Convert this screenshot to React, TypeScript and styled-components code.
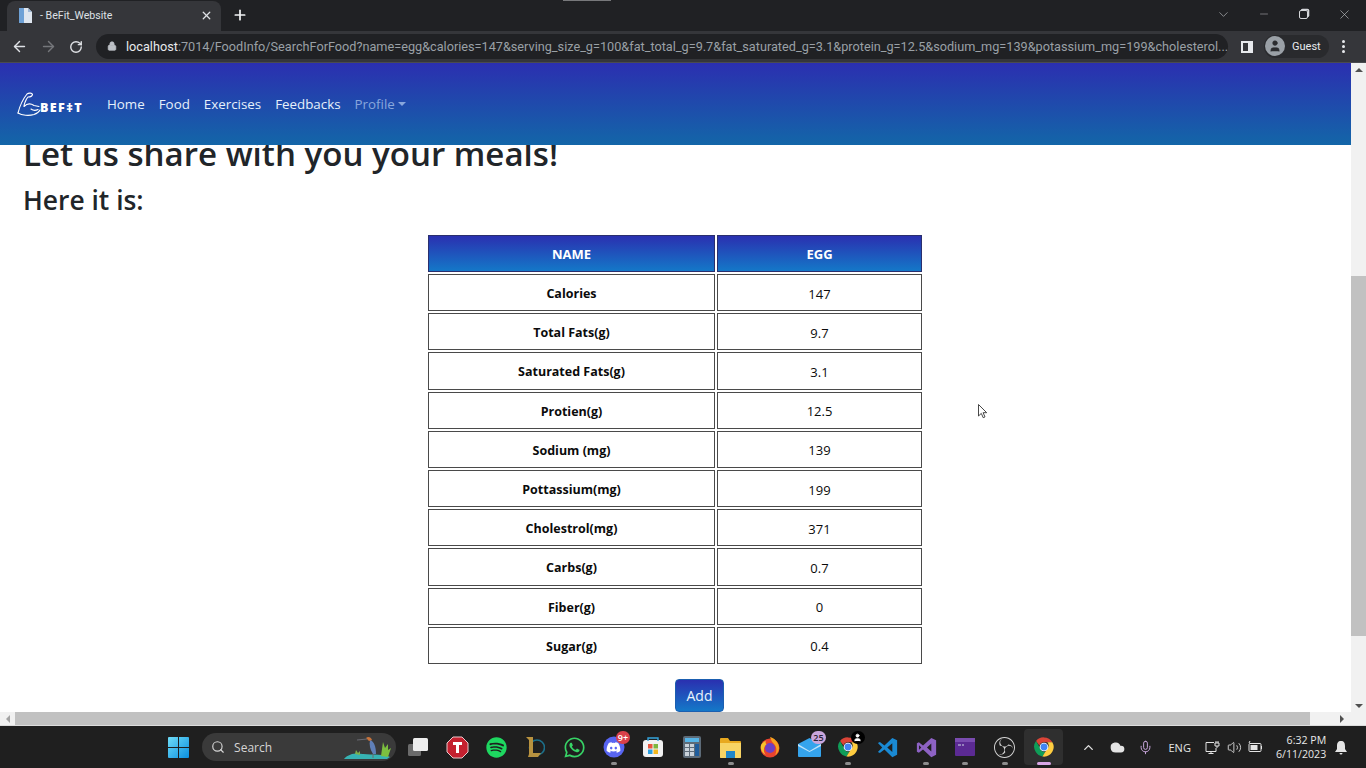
import styled, { createGlobalStyle } from "styled-components";
import { ArrowLeft, ArrowRight, RotateCw, Lock, X, Plus, ChevronDown, Minus, Search, ChevronUp, Mic, Volume2, Cloud, User } from "lucide-react";
import { FaSpotify, FaWhatsapp, FaDiscord } from "react-icons/fa";
import { SiObsstudio } from "react-icons/si";

const Global = createGlobalStyle`
  html, body { margin: 0; padding: 0; overflow: hidden; background: #fff; }
  * { box-sizing: border-box; }
  body { font-family: "Open Sans", "Noto Sans", sans-serif; }
`;

const Screen = styled.div`
  width: 1366px;
  height: 768px;
  display: flex;
  flex-direction: column;
  overflow: hidden;
  position: relative;
`;

/* ---- chrome ---- */
const TabStrip = styled.div`
  height: 31px;
  background: #202124;
  display: flex;
  align-items: flex-end;
  padding-left: 7px;
  color: #e8eaed;
  flex: none;
`;
const Tab = styled.div`
  width: 214px;
  height: 30px;
  background: #35363a;
  border-radius: 8px 8px 0 0;
  display: flex;
  align-items: center;
  padding: 0 8px 2px 11px;
  font-family: Roboto, sans-serif;
  font-size: 10.6px;
  gap: 7px;
`;
const TabTitle = styled.span`
  flex: 1;
  color: #dee1e6;
`;
const NewTab = styled.div`
  margin-left: 11px;
  height: 30px;
  padding-bottom: 2px;
  display: flex;
  align-items: center;
`;
const WindowButtons = styled.div`
  margin-left: auto;
  height: 31px;
  padding-bottom: 3px;
  display: flex;
  align-items: center;
  color: #c4c7ca;
`;
const WindowButton = styled.div<{ $w: number }>`
  width: ${(p) => p.$w}px;
  display: flex;
  justify-content: center;
`;
const Restore = styled.div`
  width: 9px;
  height: 9px;
  border: 1.2px solid #d5d7da;
  border-radius: 2px;
  box-shadow: 1.5px -1.5px 0 -0.2px #d5d7da;
`;
const Toolbar = styled.div`
  height: 32px;
  background: #35363a;
  border-bottom: 1px solid #4a4b4f;
  display: flex;
  align-items: center;
  padding-left: 11px;
  flex: none;
`;
const NavIcon = styled.div<{ $dim?: boolean }>`
  width: 29px;
  color: ${(p) => (p.$dim ? "#75777b" : "#dfe1e5")};
  display: flex;
`;
const Omnibox = styled.div`
  margin-left: -2px;
  width: 1132px;
  height: 25px;
  border-radius: 13px;
  background: #202124;
  display: flex;
  align-items: center;
  padding: 0 0 1px 11px;
  font-family: Roboto, sans-serif;
  font-size: 12.7px;
  color: #9aa0a6;
  white-space: nowrap;
  overflow: hidden;
`;
const Host = styled.span`
  color: #e8eaed;
`;
const LockWrap = styled.span`
  display: flex;
  margin-right: 9px;
  color: #bdc1c6;
`;
const SidePanel = styled.div`
  width: 12px;
  height: 12px;
  margin-left: 13px;
  border: 2px solid #e8eaed;
  border-right-width: 5px;
  flex: none;
`;
const GuestChip = styled.div`
  margin-left: 11px;
  width: 65px;
  height: 23px;
  border-radius: 12px;
  background: #292a2d;
  display: flex;
  align-items: center;
  gap: 7px;
  padding: 0 0 1px 1px;
  font-family: Roboto, sans-serif;
  font-size: 11px;
  color: #e8eaed;
`;
const Avatar = styled.div`
  width: 20px;
  height: 20px;
  border-radius: 50%;
  background: #9aa0a6;
  color: #2b2c2f;
  display: flex;
  align-items: center;
  justify-content: center;
`;
const Dots = styled.div`
  margin-left: 13px;
  display: flex;
  flex-direction: column;
  gap: 2px;
  span {
    width: 3px;
    height: 3px;
    border-radius: 50%;
    background: #e8eaed;
  }
`;

/* ---- page ---- */
const PageRow = styled.div`
  flex: 1;
  min-height: 0;
  display: flex;
`;
const Viewport = styled.div`
  flex: 1;
  overflow: hidden;
  background: #fff;
`;
const Navbar = styled.nav`
  height: 82px;
  background: linear-gradient(180deg, #2b2fb0 0%, #1366a8 100%);
  display: flex;
  align-items: center;
  padding: 0 0 0 17px;
  position: relative;
  z-index: 2;
`;
const Brand = styled.div`
  width: 83px;
  display: flex;
  align-items: center;
  color: #fff;
  font-weight: 800;
  font-size: 12.5px;
  letter-spacing: 1.4px;
`;
const BrandText = styled.span`
  margin: 6px 0 0 -2px;
`;
const NavLink = styled.a<{ $muted?: boolean }>`
  color: ${(p) => (p.$muted ? "#88a6dc" : "#e6f0fb")};
  font-size: 13.35px;
  margin: 0 7px;
  display: flex;
  align-items: center;
  gap: 3px;
`;
const Caret = styled.span`
  width: 0;
  height: 0;
  border-left: 4px solid transparent;
  border-right: 4px solid transparent;
  border-top: 4px solid #88a6dc;
`;
const Content = styled.main`
  padding: 0 0 0 23px;
  margin-top: -10px;
  color: #212529;
`;
const Heading = styled.h1`
  margin: 0;
  font-size: 33.1px;
  line-height: 38px;
  font-weight: 600;
`;
const SubHeading = styled.h2`
  margin: 10px 0 0;
  font-size: 26.4px;
  line-height: 34px;
  font-weight: 600;
`;
const FoodTable = styled.table`
  margin: 16px 0 0 403px;
  width: 498px;
  border-collapse: separate;
  border-spacing: 2px;
  table-layout: fixed;
  font-size: 12.5px;
  color: #0b0b0b;
`;
const HeadCell = styled.th<{ $w?: number }>`
  height: 37px;
  padding: 0;
  width: ${(p) => (p.$w ? `${p.$w}px` : "auto")};
  border: 1px solid #2a2f6e;
  background: linear-gradient(180deg, #2a30b0 0%, #1478c8 100%);
  color: #fff;
  font-weight: 700;
  font-size: 13px;
`;
const LabelCell = styled.td`
  height: 37.2px;
  padding: 2px 0 0;
  border: 1px solid #4a4a4a;
  text-align: center;
  font-weight: 700;
`;
const ValueCell = styled(LabelCell)`
  font-size: 13px;
  font-weight: 500;
`;
const AddButton = styled.button`
  display: block;
  margin: 13px 0 0 652px;
  width: 49px;
  height: 33px;
  border: 1px solid #1b5fb0;
  border-radius: 4px;
  background: linear-gradient(180deg, #2a30b0 0%, #1478c8 100%);
  color: #eaf3fc;
  font-family: inherit;
  font-size: 14px;
  padding: 0;
`;

/* ---- scrollbars ---- */
const VScroll = styled.div`
  width: 15px;
  background: #f1f1f1;
  display: flex;
  flex-direction: column;
  align-items: center;
  flex: none;
`;
const Arrow = styled.div<{ $dir: "up" | "down" | "left" | "right"; $color?: string }>`
  width: 0;
  height: 0;
  flex: none;
  border: 4px solid transparent;
  ${(p) => {
    const c = p.$color || "#505050";
    if (p.$dir === "up") return `border-bottom-color:${c}; border-top-width:0;`;
    if (p.$dir === "down") return `border-top-color:${c}; border-bottom-width:0;`;
    if (p.$dir === "left") return `border-right-color:${c}; border-left-width:0;`;
    return `border-left-color:${c}; border-right-width:0;`;
  }}
`;
const VThumb = styled.div`
  width: 100%;
  height: 360px;
  margin: 200px 0 0;
  background: #c1c1c1;
`;
const UpBox = styled.div`
  height: 13px;
  padding-top: 5px;
`;
const DownBox = styled.div`
  margin-top: auto;
  height: 13px;
  display: flex;
  align-items: center;
`;
const HScroll = styled.div`
  height: 14px;
  background: #f1f1f1;
  display: flex;
  align-items: center;
  flex: none;
  border-bottom: 1px solid #ddd;
`;
const HSide = styled.div<{ $w: number; $end?: boolean }>`
  width: ${(p) => p.$w}px;
  display: flex;
  justify-content: ${(p) => (p.$end ? "flex-end" : "center")};
  padding-right: ${(p) => (p.$end ? 7 : 0)}px;
  flex: none;
`;
const HThumb = styled.div`
  width: 1295px;
  height: 13px;
  background: #c1c1c1;
  flex: none;
`;

/* ---- taskbar ---- */
const Taskbar = styled.footer`
  height: 42px;
  flex: none;
  background: #1f1f1f;
  display: flex;
  align-items: center;
  padding-left: 159px;
  color: #eee;
`;
const Item = styled.div<{ $active?: boolean }>`
  width: 39.1px;
  height: 36px;
  flex: none;
  display: flex;
  align-items: center;
  justify-content: center;
  position: relative;
  border-radius: 4px;
  background: ${(p) => (p.$active ? "#2f2f2f" : "transparent")};
`;
const Dash = styled.span<{ $active?: boolean }>`
  position: absolute;
  bottom: 0;
  left: 50%;
  transform: translateX(-50%);
  width: ${(p) => (p.$active ? 14 : 6)}px;
  height: 3px;
  border-radius: 2px;
  background: ${(p) => (p.$active ? "#d9a6e6" : "#8d8d8d")};
`;
const Badge = styled.span<{ $bg: string; $fg: string }>`
  position: absolute;
  top: 2px;
  right: 3px;
  min-width: 14px;
  height: 13px;
  padding: 0 2px;
  border-radius: 7px;
  background: ${(p) => p.$bg};
  color: ${(p) => p.$fg};
  font-size: 9px;
  line-height: 13px;
  text-align: center;
  font-weight: 600;
  display: flex;
  align-items: center;
  justify-content: center;
`;
const SearchPill = styled.div`
  width: 194px;
  height: 28px;
  margin: 0 2.5px 0 4px;
  border-radius: 14px;
  background: #3a3a3a;
  display: flex;
  align-items: center;
  padding-left: 9px;
  gap: 9px;
  font-size: 12px;
  color: #d5d5d5;
  flex: none;
`;
const HeronBox = styled.div`
  margin-left: auto;
  margin-right: 3px;
  display: flex;
`;
const Tray = styled.div`
  margin-left: 15px;
  display: flex;
  align-items: center;
  color: #e4e4e4;
`;
const TraySlot = styled.div<{ $w: number }>`
  width: ${(p) => p.$w}px;
  display: flex;
  justify-content: center;
  font-size: 11px;
  flex: none;
`;
const Clock = styled.div`
  width: 62px;
  margin-left: 1px;
  margin-top: -1px;
  text-align: right;
  font-size: 10.6px;
  line-height: 14px;
  color: #e8e8e8;
`;
const Cursor = styled.svg`
  position: absolute;
  left: 978px;
  top: 404px;
`;
const RecorderNotch = styled.div`
  position: absolute;
  left: 563px;
  top: 0;
  width: 48px;
  height: 1px;
  background: #77787b;
`;

const Rows: [string, string][] = [
  ["Calories", "147"],
  ["Total Fats(g)", "9.7"],
  ["Saturated Fats(g)", "3.1"],
  ["Protien(g)", "12.5"],
  ["Sodium (mg)", "139"],
  ["Pottassium(mg)", "199"],
  ["Cholestrol(mg)", "371"],
  ["Carbs(g)", "0.7"],
  ["Fiber(g)", "0"],
  ["Sugar(g)", "0.4"],
];

function ArmLogo() {
  return (
    <svg width="25" height="25" viewBox="0 0 25 25" fill="none" stroke="#fff" strokeWidth="1.1" strokeLinecap="round" strokeLinejoin="round" style={{ flex: "none" }}>
      <path d="M1 21 C3 13 6 7 10 2 C12 0.5 15 1 15.5 2.5 C15 4.5 13 5 11 5 L9.5 7 C8 10 7 12 7 14.5 C10 11.5 14 11.5 17 13.5 L22 14.5" />
      <path d="M1 21 C5 23.5 12 24 17 22.5 C20 21.5 22 20 23 18" />
      <path d="M14 17 C16 18.5 19 18.5 21 17.5" />
    </svg>
  );
}

function ChromeIcon() {
  return (
    <svg width="22" height="22" viewBox="0 0 48 48">
      <path fill="#db4437" d="M24 3a21 21 0 0 1 18.2 10.5H24a10.5 10.5 0 0 0-10 7.2L6.6 10.9A21 21 0 0 1 24 3z" />
      <path fill="#0f9d58" d="M5.8 34.5A21 21 0 0 1 6.6 10.9l9.3 16.2a10.5 10.5 0 0 0 11.3 7.4L20.6 44.7A21 21 0 0 1 5.8 34.5z" />
      <path fill="#ffcd40" d="M42.2 13.5A21 21 0 0 1 24 45c-1.2 0-2.3-.1-3.4-.3L30 29.3a10.5 10.5 0 0 0 1.2-15.8z" />
      <circle cx="24" cy="24" r="9.5" fill="#fff" />
      <circle cx="24" cy="24" r="7.5" fill="#4285f4" />
    </svg>
  );
}

function WindowsLogo() {
  return (
    <svg width="21" height="21" viewBox="0 0 21 21">
      <defs>
        <linearGradient id="win" x1="0" y1="0" x2="1" y2="1">
          <stop offset="0" stopColor="#6fdcf7" />
          <stop offset="1" stopColor="#0a8fe0" />
        </linearGradient>
      </defs>
      <path fill="url(#win)" d="M0 1a1 1 0 0 1 1-1h9v10H0zM11 0h9a1 1 0 0 1 1 1v9H11zM0 11h10v10H1a1 1 0 0 1-1-1zM11 11h10v9a1 1 0 0 1-1 1h-9z" />
    </svg>
  );
}

function Heron() {
  return (
    <svg width="50" height="26" viewBox="0 0 50 26">
      <path fill="#37b3b3" d="M1 25 C6 19 14 19 20 20 C30 21 42 20 47 23 L44 25z" />
      <path fill="#7fb04a" d="M12 20 l1-4 2 3 2-2 0 4z" />
      <path fill="#5f7fb8" d="M27 6 C31 7 33 13 33 20 L30 20 C27 15 26 11 27 6z" />
      <path fill="#c9743c" d="M23 4 C25 2 28 3 29 6 L26 7z" />
      <path stroke="#6a6a72" strokeWidth="1" d="M14 6 L24 5 M30 20 L30 24" />
      <path fill="#7cbf3f" d="M38 22 L40 8 L42 14 L45 10 L45 16 L48 14 L45 23z" />
    </svg>
  );
}

function App() {
  return (
    <Screen>
      <Global />
      <RecorderNotch />
      <TabStrip>
        <Tab>
          <svg width="15" height="15" viewBox="0 0 15 15">
            <path fill="#dfe6ef" d="M1 0h9l4 4v11H1z" />
            <path fill="#6ea1d6" d="M1 0h5v15H1z" />
            <path fill="#9fb9d6" d="M10 0l4 4h-4z" />
          </svg>
          <TabTitle>- BeFit_Website</TabTitle>
          <X size={13} color="#dfe1e5" strokeWidth={2.4} />
        </Tab>
        <NewTab>
          <Plus size={16} strokeWidth={2.6} color="#f1f3f4" />
        </NewTab>
        <WindowButtons>
          <WindowButton $w={40}><ChevronDown size={15} strokeWidth={1} /></WindowButton>
          <WindowButton $w={41}><Minus size={12} strokeWidth={1} /></WindowButton>
          <WindowButton $w={38}><Restore /></WindowButton>
          <WindowButton $w={44}><X size={15} strokeWidth={1} /></WindowButton>
        </WindowButtons>
      </TabStrip>
      <Toolbar>
        <NavIcon><ArrowLeft size={17} /></NavIcon>
        <NavIcon $dim><ArrowRight size={17} /></NavIcon>
        <NavIcon><RotateCw size={14} strokeWidth={2.4} /></NavIcon>
        <Omnibox>
          <LockWrap><Lock size={10} fill="#bdc1c6" /></LockWrap>
          <Host>localhost</Host>
          :7014/FoodInfo/SearchForFood?name=egg&amp;calories=147&amp;serving_size_g=100&amp;fat_total_g=9.7&amp;fat_saturated_g=3.1&amp;protein_g=12.5&amp;sodium_mg=139&amp;potassium_mg=199&amp;cholesterol...
        </Omnibox>
        <SidePanel />
        <GuestChip>
          <Avatar><User size={14} fill="#2b2c2f" strokeWidth={1} /></Avatar>
          Guest
        </GuestChip>
        <Dots><span /><span /><span /></Dots>
      </Toolbar>

      <PageRow>
        <Viewport>
          <Navbar>
            <Brand>
              <ArmLogo />
              <BrandText>BEF‡T</BrandText>
            </Brand>
            <NavLink>Home</NavLink>
            <NavLink>Food</NavLink>
            <NavLink>Exercises</NavLink>
            <NavLink>Feedbacks</NavLink>
            <NavLink $muted>Profile<Caret /></NavLink>
          </Navbar>
          <Content>
            <Heading>Let us share with you your meals!</Heading>
            <SubHeading>Here it is:</SubHeading>
            <FoodTable>
              <thead>
                <tr>
                  <HeadCell $w={287}>NAME</HeadCell>
                  <HeadCell>EGG</HeadCell>
                </tr>
              </thead>
              <tbody>
                {Rows.map(([label, value]) => (
                  <tr key={label}>
                    <LabelCell>{label}</LabelCell>
                    <ValueCell>{value}</ValueCell>
                  </tr>
                ))}
              </tbody>
            </FoodTable>
            <AddButton>Add</AddButton>
          </Content>
        </Viewport>
        <VScroll>
          <UpBox><Arrow $dir="up" /></UpBox>
          <VThumb />
          <DownBox><Arrow $dir="down" /></DownBox>
        </VScroll>
      </PageRow>
      <HScroll>
        <HSide $w={15}><Arrow $dir="left" $color="#a3a3a3" /></HSide>
        <HThumb />
        <HSide $w={41} $end><Arrow $dir="right" /></HSide>
      </HScroll>

      <Taskbar>
        <Item><WindowsLogo /></Item>
        <SearchPill>
          <Search size={14} strokeWidth={2} />
          Search
          <HeronBox><Heron /></HeronBox>
        </SearchPill>
        <Item>
          <svg width="22" height="20" viewBox="0 0 22 20">
            <rect x="1" y="7" width="13" height="12" rx="1.5" fill="#6b6b6b" />
            <rect x="6" y="1" width="15" height="13" rx="1.5" fill="#eeeeee" />
          </svg>
        </Item>
        <Item>
          <svg width="23" height="23" viewBox="0 0 23 23">
            <path fill="#c4202f" stroke="#e9c9cc" strokeWidth="1" d="M7 1h9l6 6v9l-6 6H7l-6-6V7z" />
            <path fill="#fff" d="M7 6h9v3h-3v8h-3V9H7z" />
          </svg>
        </Item>
        <Item><FaSpotify size={21} color="#1ed760" /></Item>
        <Item>
          <svg width="20" height="23" viewBox="0 0 20 23" fill="none">
            <circle cx="12" cy="11.5" r="7.5" stroke="#1c6f8a" strokeWidth="1.6" />
            <path fill="#b8923f" d="M1 1h7v16h8l-3 4H3l1-3V4z" />
          </svg>
        </Item>
        <Item><FaWhatsapp size={23} color="#37d366" /></Item>
        <Item>
          <svg width="22" height="22" viewBox="0 0 22 22" style={{ position: "absolute" }}>
            <circle cx="11" cy="11" r="10.5" fill="#5865f2" />
          </svg>
          <FaDiscord size={15} color="#fff" style={{ position: "relative" }} />
          <Badge $bg="#d9404a" $fg="#fff">9+</Badge>
          <Dash />
        </Item>
        <Item>
          <svg width="22" height="22" viewBox="0 0 22 22">
            <rect x="1" y="4" width="20" height="17" rx="3" fill="#f2f2f2" />
            <path d="M6 5V2h10v3" fill="none" stroke="#35a4dc" strokeWidth="1.4" />
            <rect x="6" y="8" width="4.5" height="4.5" fill="#e8553e" />
            <rect x="11.5" y="8" width="4.5" height="4.5" fill="#7db73f" />
            <rect x="6" y="13.5" width="4.5" height="4.5" fill="#2a9fe0" />
            <rect x="11.5" y="13.5" width="4.5" height="4.5" fill="#f4b81f" />
          </svg>
        </Item>
        <Item>
          <svg width="18" height="22" viewBox="0 0 18 22">
            <rect width="18" height="22" rx="2" fill="#5d6b78" />
            <rect x="2" y="2" width="14" height="4" fill="#57b4e6" />
            <path fill="#c9d2da" d="M2 8h4v3H2zM7 8h4v3H7zM2 12h4v3H2zM7 12h4v3H7zM2 16h4v4H2zM7 16h4v4H7z" />
            <path fill="#1f5d9c" d="M12 8h4v12h-4z" />
          </svg>
        </Item>
        <Item>
          <svg width="23" height="21" viewBox="0 0 23 21">
            <path fill="#e8a91f" d="M1 2a1 1 0 0 1 1-1h7l2 3h10a1 1 0 0 1 1 1v15a1 1 0 0 1-1 1H2a1 1 0 0 1-1-1z" />
            <path fill="#f7d465" d="M1 6h21v14a1 1 0 0 1-1 1H2a1 1 0 0 1-1-1z" />
            <rect x="7" y="14" width="9" height="7" fill="#1f86c9" />
          </svg>
          <Dash />
        </Item>
        <Item>
          <svg width="22" height="22" viewBox="0 0 22 22">
            <circle cx="11" cy="12" r="9.5" fill="#e8432f" />
            <path fill="#f7a11e" d="M11 1c4 1 9 5 9 11 0 3-2 6-4 7 2-3 2-8-1-11C13 6 12 4 11 1z" />
            <path fill="#f6c22c" d="M2 9c2-3 4-4 5-4-1 2 0 3 1 3-4 3-4 8-1 11-4-2-6-6-5-10z" />
            <circle cx="11" cy="12" r="5" fill="#6e3fc4" />
          </svg>
        </Item>
        <Item>
          <svg width="23" height="20" viewBox="0 0 23 20">
            <path fill="#35a4ec" d="M0 7L11.5 1 23 7v12a1 1 0 0 1-1 1H1a1 1 0 0 1-1-1z" />
            <path fill="#bfe3f9" d="M0 7l11.5 7L23 7v2l-11.5 6L0 9z" />
          </svg>
          <Badge $bg="#c9a6dc" $fg="#2b2233">25</Badge>
        </Item>
        <Item>
          <ChromeIcon />
          <Badge $bg="#000" $fg="#fff"><User size={9} fill="#fff" /></Badge>
          <Dash />
        </Item>
        <Item>
          <svg width="21" height="21" viewBox="0 0 24 24">
            <path fill="#1a8ad4" d="M17.5 1L23 3.6v16.8L17.5 23l-9-8.6-5.2 4L1 17.2 6 12 1 6.8l2.3-1.2 5.2 4zM17.5 7l-5.8 5 5.8 5z" />
          </svg>
        </Item>
        <Item>
          <svg width="21" height="21" viewBox="0 0 24 24">
            <path fill="#8d62c4" d="M17.5 1L23 3.6v16.8L17.5 23 8 14.2 3.3 18 1 16.8V7.2L3.3 6 8 9.8zM3.5 9.5v5L6 12zM17.5 7.5L12.5 12l5 4.5z" />
          </svg>
          <Dash />
        </Item>
        <Item>
          <svg width="20" height="18" viewBox="0 0 20 18">
            <rect width="20" height="18" rx="1" fill="#5b2a93" />
            <rect width="20" height="4" fill="#7a4cb0" />
            <path d="M3 7h3M7 7h2" stroke="#cfd8e6" strokeWidth="1" />
          </svg>
          <Dash />
        </Item>
        <Item>
          <SiObsstudio size={21} color="#d5d5d5" />
          <Dash />
        </Item>
        <Item $active>
          <ChromeIcon />
          <Dash $active />
        </Item>
        <Tray>
          <TraySlot $w={20}><ChevronUp size={15} strokeWidth={2.2} /></TraySlot>
          <TraySlot $w={38}><Cloud size={15} fill="#e4e4e4" /></TraySlot>
          <TraySlot $w={19}><Mic size={15} color="#c9a6dc" strokeWidth={1.6} /></TraySlot>
          <TraySlot $w={49}>ENG</TraySlot>
          <TraySlot $w={17}>
            <svg width="15" height="15" viewBox="0 0 15 15" fill="none" stroke="#e4e4e4">
              <path d="M9 2.5H1v9h10V8M6 11.5v2M3.5 13.5h5" />
              <path d="M11 1v2M13 1v2M10 3h4v3h-4zM12 6v2" />
            </svg>
          </TraySlot>
          <TraySlot $w={26}><Volume2 size={15} strokeWidth={1.4} /></TraySlot>
          <TraySlot $w={16}>
            <svg width="16" height="12" viewBox="0 0 16 12">
              <rect x="2" y="2.5" width="12" height="8" rx="1" fill="none" stroke="#e4e4e4" />
              <rect x="3.5" y="4" width="7" height="5" fill="#e4e4e4" />
              <path stroke="#e4e4e4" d="M14.5 5v3M3 0l-1 2" />
            </svg>
          </TraySlot>
          <Clock>6:32 PM<br />6/11/2023</Clock>
          <TraySlot $w={30}>
            <svg width="14" height="15" viewBox="0 0 14 15">
              <path fill="#e4e4e4" d="M7 1c3 0 4 2 4 5v3l2 3H1l2-3V6c0-3 1-5 4-5zM5.5 13h3a1.5 1.5 0 0 1-3 0z" />
            </svg>
          </TraySlot>
        </Tray>
      </Taskbar>

      <Cursor width="10" height="15" viewBox="0 0 10 15">
        <path d="M.5.5v11.5l2.8-2.6 1.9 4.3 1.8-.8-1.9-4.2h3.6z" fill="#fff" stroke="#333" strokeWidth="0.9" />
      </Cursor>
    </Screen>
  );
}

export default App;
